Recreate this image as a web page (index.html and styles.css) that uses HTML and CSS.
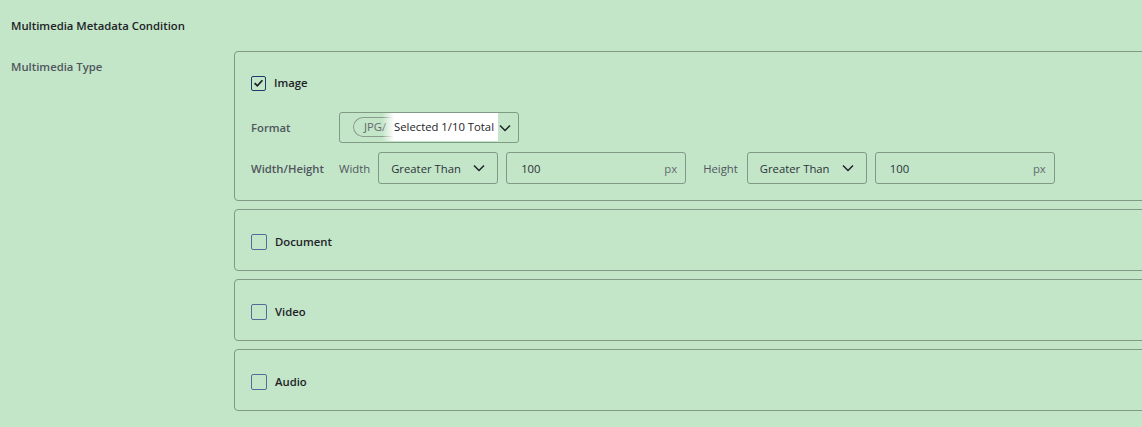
FILE: index.html
```html
<!DOCTYPE html>
<html lang="en">
<head>
    <meta charset="UTF-8">
    <title>Multimedia Metadata Condition</title>
    <link rel="stylesheet" href="styles.css">
</head>
<body>
    <div class="page">
        <h2 class="section-title">Multimedia Metadata Condition</h2>

        <div class="field-row">
            <div class="field-label">Multimedia Type</div>
            <div class="field-body">

                <!-- Image -->
                <div class="type-card">
                    <label class="type-check">
                        <span class="box checked">
                            <svg viewBox="0 0 16 16" width="14" height="14"><path d="M3.2 8.2 L6.6 11.4 L12.8 4.6" fill="none" stroke="#1d2327" stroke-width="2.2"/></svg>
                        </span>
                        Image
                    </label>

                    <div class="opt-row">
                        <span class="opt-label">Format</span>
                        <div class="multi-select">
                            <span class="pill">JPG/</span>
                            <span class="summary">Selected 1/10 Total</span>
                            <svg class="chev" viewBox="0 0 12 8" width="12" height="8"><path d="M1 1.5 L6 6.5 L11 1.5" fill="none" stroke="#1d2327" stroke-width="1.5"/></svg>
                        </div>
                    </div>

                    <div class="opt-row">
                        <span class="opt-label">Width/Height</span>
                        <span class="sub-label">Width</span>
                        <div class="select">
                            Greater Than
                            <svg class="chev" viewBox="0 0 12 8" width="12" height="8"><path d="M1 1.5 L6 6.5 L11 1.5" fill="none" stroke="#1d2327" stroke-width="1.5"/></svg>
                        </div>
                        <div class="num-input"><span>100</span><span class="unit">px</span></div>
                        <span class="sub-label height">Height</span>
                        <div class="select">
                            Greater Than
                            <svg class="chev" viewBox="0 0 12 8" width="12" height="8"><path d="M1 1.5 L6 6.5 L11 1.5" fill="none" stroke="#1d2327" stroke-width="1.5"/></svg>
                        </div>
                        <div class="num-input"><span>100</span><span class="unit">px</span></div>
                    </div>
                </div>

                <div class="type-card">
                    <label class="type-check"><span class="box"></span>Document</label>
                </div>

                <div class="type-card">
                    <label class="type-check"><span class="box"></span>Video</label>
                </div>

                <div class="type-card">
                    <label class="type-check"><span class="box"></span>Audio</label>
                </div>

            </div>
        </div>
    </div>
</body>
</html>
```

FILE: styles.css
```css
body {
    margin: 0;
    padding: 0;
    background: #c3e5c8;
    font-family: 'Open Sans', 'Noto Sans', sans-serif;
    font-size: 11.3px;
    color: #1d2327;
    overflow: hidden;
}

.page {
    padding: 16px 0 0 11px;
}

.section-title {
    margin: 0 0 15px;
    font-size: 11.3px;
    font-weight: 600;
    line-height: 20px;
    color: #1d2327;
}

.field-row {
    display: flex;
}

.field-label {
    width: 223px;
    flex-shrink: 0;
    padding-top: 8px;
    font-weight: 600;
    color: #50575e;
}

.field-body {
    flex: 1;
    margin-right: -20px;
}

.type-card {
    border: 1px solid #809a86;
    border-radius: 4px;
    padding: 22px 16px 16px;
    margin-bottom: 8px;
    min-height: 20px;
}

.type-card:not(:first-child) {
    padding: 23px 16px 17px;
}

.type-check {
    display: flex;
    align-items: center;
    gap: 8px;
    font-weight: 600;
    color: #1d2327;
    line-height: 18px;
}

.box {
    width: 14px;
    height: 14px;
    border: 1px solid #4f6e9c;
    border-radius: 2px;
    display: flex;
    align-items: center;
    justify-content: center;
}

.box.checked {
    border: 1.5px solid #1c3b6a;
    width: 13px;
    height: 13px;
}

.opt-row {
    display: flex;
    align-items: center;
    margin-top: 19px;
    height: 32px;
}

.opt-row + .opt-row {
    margin-top: 9px;
}

.opt-label {
    width: 88px;
    font-weight: 600;
    color: #50575e;
}

.sub-label {
    color: #50575e;
    margin-right: 8px;
}

.sub-label.height {
    margin-left: 17px;
    margin-right: 9px;
}

.multi-select {
    position: relative;
    width: 180px;
    height: 31px;
    border: 1px solid #809a86;
    border-radius: 3px;
    display: flex;
    align-items: center;
    padding-left: 13px;
    box-sizing: border-box;
    overflow: hidden;
}

.pill {
    border: 1px solid #8a9c8e;
    border-radius: 10px 0 0 10px;
    border-right: none;
    height: 18px;
    line-height: 18px;
    padding: 0 8px 0 10px;
    color: #646970;
    white-space: nowrap;
}

.summary {
    position: absolute;
    left: 42px;
    top: 0;
    bottom: 1px;
    width: 116px;
    padding-left: 12px;
    box-sizing: border-box;
    display: flex;
    align-items: center;
    white-space: nowrap;
    background: linear-gradient(to right, rgba(255,255,255,0), #fff 12px);
    color: #1d2327;
}

.multi-select .chev {
    position: absolute;
    right: 7px;
    top: 11px;
}

.select {
    width: 120px;
    height: 32px;
    box-sizing: border-box;
    border: 1px solid #809a86;
    border-radius: 3px;
    display: flex;
    align-items: center;
    justify-content: space-between;
    padding: 0 12px 0 12px;
    color: #2c3338;
}

.num-input {
    width: 180px;
    height: 32px;
    box-sizing: border-box;
    margin-left: 8px;
    border: 1px solid #809a86;
    border-radius: 3px;
    display: flex;
    align-items: center;
    justify-content: space-between;
    padding: 0 8px 0 14px;
    color: #2c3338;
}

.unit {
    color: #646970;
}
```
